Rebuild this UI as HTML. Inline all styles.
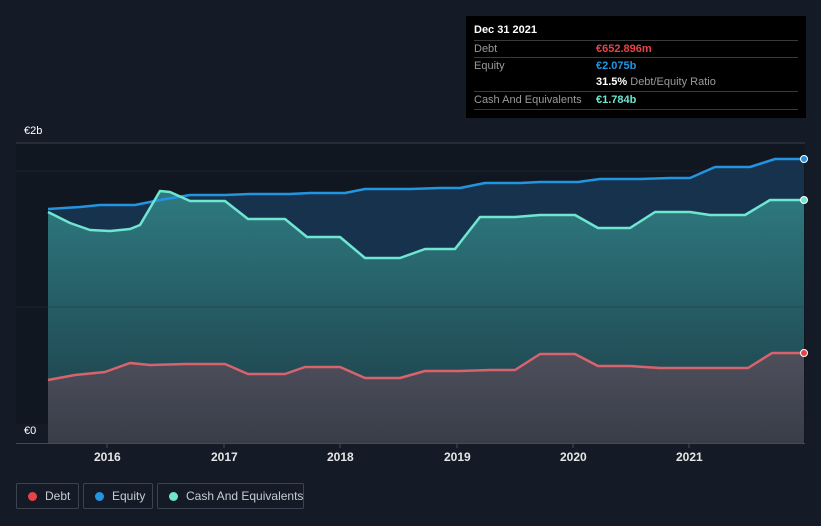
<!DOCTYPE html><html><head><style>
body{margin:0;background:#151b26;font-family:"Liberation Sans",sans-serif;width:821px;height:526px;overflow:hidden;position:relative}
.tt{position:absolute;left:466px;top:16px;width:340px;height:102px;background:#000;color:#fff;font-size:11px}
.r{position:absolute;left:8px;width:324px;border-top:1px solid #3a3a3a;height:17px;line-height:17px;color:#9a9a9a}
.v{position:absolute;left:122px;font-weight:bold}
.lg{position:absolute;top:483px;height:26px;border:1px solid #3c4350;border-radius:2px;color:#c8ccd2;font-size:12px;line-height:24px;box-sizing:border-box;white-space:nowrap}
.lg i{position:absolute;left:11px;top:8px;width:9px;height:9px;border-radius:50%}
.ax{position:absolute;top:450px;color:#e6e6e6;font-size:12px;font-weight:bold}
</style></head><body>
<svg width="821" height="526" style="position:absolute;left:0;top:0">
<defs><linearGradient id="g" x1="0" y1="0" x2="0" y2="1"><stop offset="0" stop-color="#2e7a80"/><stop offset="1" stop-color="#1c3a45"/></linearGradient>
<linearGradient id="d" x1="0" y1="0" x2="0" y2="1"><stop offset="0" stop-color="#4f4f5c"/><stop offset="1" stop-color="#383d48"/></linearGradient></defs>
<rect x="16" y="143" width="789" height="300" fill="#111720"/>
<line x1="16" y1="143" x2="805" y2="143" stroke="#3a404b"/>
<polygon fill="#16324d" points="48,209 80,207 100,205 135,205 160,200 190,195 225,195 250,194 290,194 310,193 345,193 365,189 410,189 440,188 460,188 485,183 520,183 540,182 578,182 600,179 640,179 670,178 690,178 715,167 750,167 775,159 804,159 804,443 48,443"/>
<polygon fill="url(#g)" points="48,212 70,223 90,230 110,231 130,229 140,225 160,191 170,192 190,201 225,201 248,219 285,219 307,237 340,237 365,258 400,258 425,249 455,249 480,217 515,217 540,215 575,215 598,228 630,228 655,212 690,212 710,215 745,215 770,200 804,200 804,443 48,443"/>
<line x1="16" y1="171" x2="805" y2="171" stroke="#2a303a" stroke-opacity=".5"/>
<line x1="16" y1="307" x2="805" y2="307" stroke="#2a303a" stroke-opacity=".5"/>
<polygon fill="url(#d)" points="48,380 75,375 105,372 130,363 150,365 185,364 225,364 248,374 285,374 305,367 340,367 365,378 400,378 425,371 460,371 490,370 515,370 540,354 575,354 598,366 630,366 660,368 748,368 772,353 804,353 804,443 48,443"/>
<g fill="none" stroke-width="2.5" stroke-linejoin="round">
<polyline stroke="#2394e0" points="48,209 80,207 100,205 135,205 160,200 190,195 225,195 250,194 290,194 310,193 345,193 365,189 410,189 440,188 460,188 485,183 520,183 540,182 578,182 600,179 640,179 670,178 690,178 715,167 750,167 775,159 804,159"/>
<polyline stroke="#6ee6d0" points="48,212 70,223 90,230 110,231 130,229 140,225 160,191 170,192 190,201 225,201 248,219 285,219 307,237 340,237 365,258 400,258 425,249 455,249 480,217 515,217 540,215 575,215 598,228 630,228 655,212 690,212 710,215 745,215 770,200 804,200"/>
<polyline stroke="#d9636c" points="48,380 75,375 105,372 130,363 150,365 185,364 225,364 248,374 285,374 305,367 340,367 365,378 400,378 425,371 460,371 490,370 515,370 540,354 575,354 598,366 630,366 660,368 748,368 772,353 804,353"/>
</g>
<circle cx="804" cy="159" r="3.5" fill="#2394e0" stroke="#fff"/>
<circle cx="804" cy="200" r="3.5" fill="#6ee6d0" stroke="#fff"/>
<circle cx="804" cy="353" r="3.5" fill="#e6434a" stroke="#fff"/>
<line x1="16" y1="443.5" x2="805" y2="443.5" stroke="#454b55"/>
<g stroke="#454b55"><line x1="107" y1="443" x2="107" y2="448"/><line x1="224" y1="443" x2="224" y2="448"/><line x1="340" y1="443" x2="340" y2="448"/><line x1="457" y1="443" x2="457" y2="448"/><line x1="573" y1="443" x2="573" y2="448"/><line x1="689" y1="443" x2="689" y2="448"/></g>
<rect x="16" y="424" width="32" height="19" fill="#151b26"/>
</svg>
<div style="position:absolute;left:24px;top:125px;color:#fff;font-size:11px">€2b</div>
<div style="position:absolute;left:24px;top:425px;color:#fff;font-size:11px">€0</div>
<div class="ax" style="left:94px">2016</div><div class="ax" style="left:211px">2017</div><div class="ax" style="left:327px">2018</div><div class="ax" style="left:444px">2019</div><div class="ax" style="left:560px">2020</div><div class="ax" style="left:676px">2021</div>
<div class="tt">
<div style="position:absolute;left:8px;top:8px;font-weight:bold">Dec 31 2021</div>
<div class="r" style="top:24px">Debt<span class="v" style="color:#e6434a">€652.896m</span></div>
<div class="r" style="top:41px">Equity<span class="v" style="color:#2394e0">€2.075b</span></div>
<div class="r" style="top:58px;border-top:none"><span class="v" style="color:#fff">31.5% <span style="color:#9a9a9a;font-weight:normal">Debt/Equity Ratio</span></span></div>
<div class="r" style="top:75px">Cash And Equivalents<span class="v" style="color:#6ee6d0">€1.784b</span></div>
<div class="r" style="top:93px;height:0"></div>
</div>
<div class="lg" style="left:16px;width:63px"><i style="background:#e6434a"></i><span style="margin-left:28px">Debt</span></div>
<div class="lg" style="left:83px;width:70px"><i style="background:#2394e0"></i><span style="margin-left:28px">Equity</span></div>
<div class="lg" style="left:157px;width:147px"><i style="background:#6ee6d0"></i><span style="margin-left:28px">Cash And Equivalents</span></div>
</body></html>
